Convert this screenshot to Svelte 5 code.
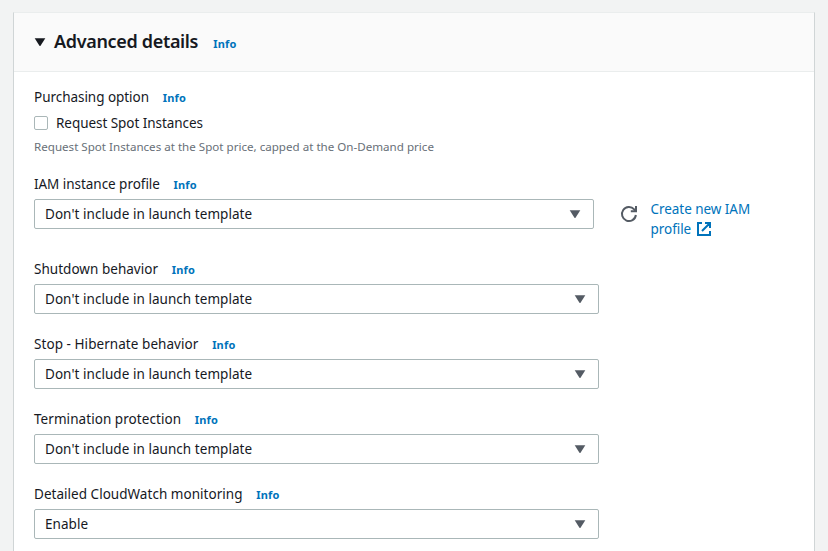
<script>
  const unset = "Don't include in launch template";
  const fields = [
    { label: 'Shutdown behavior', value: unset, cls: 'shutdown' },
    { label: 'Stop - Hibernate behavior', value: unset, cls: 'hibernate' },
    { label: 'Termination protection', value: unset, cls: 'termination' },
    { label: 'Detailed CloudWatch monitoring', value: 'Enable', cls: 'monitoring' }
  ];
</script>

{#snippet label(text, cls)}
  <div class="label"><span class={cls}>{text}</span><a class="info" href="#info">Info</a></div>
{/snippet}

{#snippet select(value)}
  <button class="select" type="button">
    <span class="value">{value}</span>
    <svg width="12" height="9" viewBox="0 0 12 9"><path d="M0.7 .2H11.3L6.7 7.6Q6 8.6 5.3 7.6Z" fill="#545b64" /></svg>
  </button>
{/snippet}

<main>
  <section class="card">
    <header>
      <svg class="caret" width="12" height="9" viewBox="0 0 12 9"><path d="M0.7 .2H11.3L6.7 7.6Q6 8.6 5.3 7.6Z" fill="#16191f" /></svg>
      <h2>Advanced details</h2>
      <a class="info" href="#info">Info</a>
    </header>
    <div class="body">
      {@render label('Purchasing option', 'purchasing')}
      <label class="check"><i></i><span class="request">Request Spot Instances</span></label>
      <p class="hint">Request Spot Instances at the Spot price, capped at the On-Demand price</p>

      {@render label('IAM instance profile', 'iam')}
      <div class="row">
        {@render select(unset)}
        <svg class="refresh" width="18" height="18" viewBox="0 0 18 18" fill="none" stroke="#545b64" stroke-width="2">
          <path d="M15.9 10A7 7 0 1 1 14.2 4.4L15.6 6" />
          <path d="M16 1V6.2H10.8" />
        </svg>
        <a class="create" href="#create">Create new IAM<br />profile<svg width="14" height="14" viewBox="0 0 14 14" fill="none" stroke="#0073bb" stroke-width="2"><path d="M5 1H1V13H13V9M8 1H13V6M13 1L5 9" /></svg></a>
      </div>

      {#each fields as f}
        <div class="field">
          {@render label(f.label, f.cls)}
          {@render select(f.value)}
        </div>
      {/each}
    </div>
  </section>
</main>

<style>
  :global(body) { background: #f2f3f3; }
  main {
    box-sizing: border-box;
    height: 551px;
    padding: 12px 13px 0;
    overflow: hidden;
    font: 13.5px/20px "Noto Sans", "Open Sans", sans-serif;
    color: #16191f;
  }
  .card {
    box-sizing: border-box;
    width: 802px;
    height: 560px;
    background: #fff;
    border: 1px solid #d0d5d6;
    border-top-color: #eaeded;
  }
  header {
    box-sizing: border-box;
    display: flex;
    align-items: center;
    height: 59px;
    padding-left: 20px;
    background: #fafafa;
    border-bottom: 1px solid #eaeded;
  }
  h2 {
    margin: 0 15px 0 8px;
    padding-bottom: 2px;
    font-size: 18px;
    line-height: 22px;
    font-weight: 600;
    white-space: nowrap;
    letter-spacing: -0.33px;
  }
  a { color: #0073bb; text-decoration: none; }
  .info { font-size: 11px; font-weight: 700; letter-spacing: 0.2px; }
  header .info { padding-top: 3px; }
  .body { padding: 15px 20px 0; }
  .label { display: flex; height: 20px; margin-bottom: 5px; white-space: nowrap; }
  .label .info { margin-left: 13.7px; padding-top: 1px; }
  .purchasing, .iam { letter-spacing: -0.04px; }
  .shutdown, .monitoring { letter-spacing: 0.03px; }
  .hibernate, .termination { letter-spacing: 0.06px; }
  .request { letter-spacing: -0.05px; }
  .value { letter-spacing: 0.05px; }
  .check { display: flex; align-items: center; height: 22px; }
  .check i {
    box-sizing: border-box;
    width: 14px;
    height: 14px;
    margin-right: 8px;
    border: 1px solid #aab7b8;
    border-radius: 2px;
  }
  .hint { margin: 3px 0 17px; font-size: 11.6px; line-height: 20px; color: #687078; white-space: nowrap; }
  .select {
    box-sizing: border-box;
    display: flex;
    align-items: center;
    justify-content: space-between;
    width: 565px;
    height: 30px;
    padding: 0 12px 0 10px;
    border: 1px solid #aab7b8;
    border-radius: 2px;
    background: #fff;
    font: inherit;
    color: inherit;
    white-space: nowrap;
  }
  .row { display: flex; height: 60px; }
  .row .select { width: 560px; }
  .refresh { margin: 6px 12.5px 0 26px; }
  .create { white-space: nowrap; letter-spacing: -0.05px; }
  .create svg { margin-left: 6px; vertical-align: -2px; }
  .field { height: 75px; }
</style>
